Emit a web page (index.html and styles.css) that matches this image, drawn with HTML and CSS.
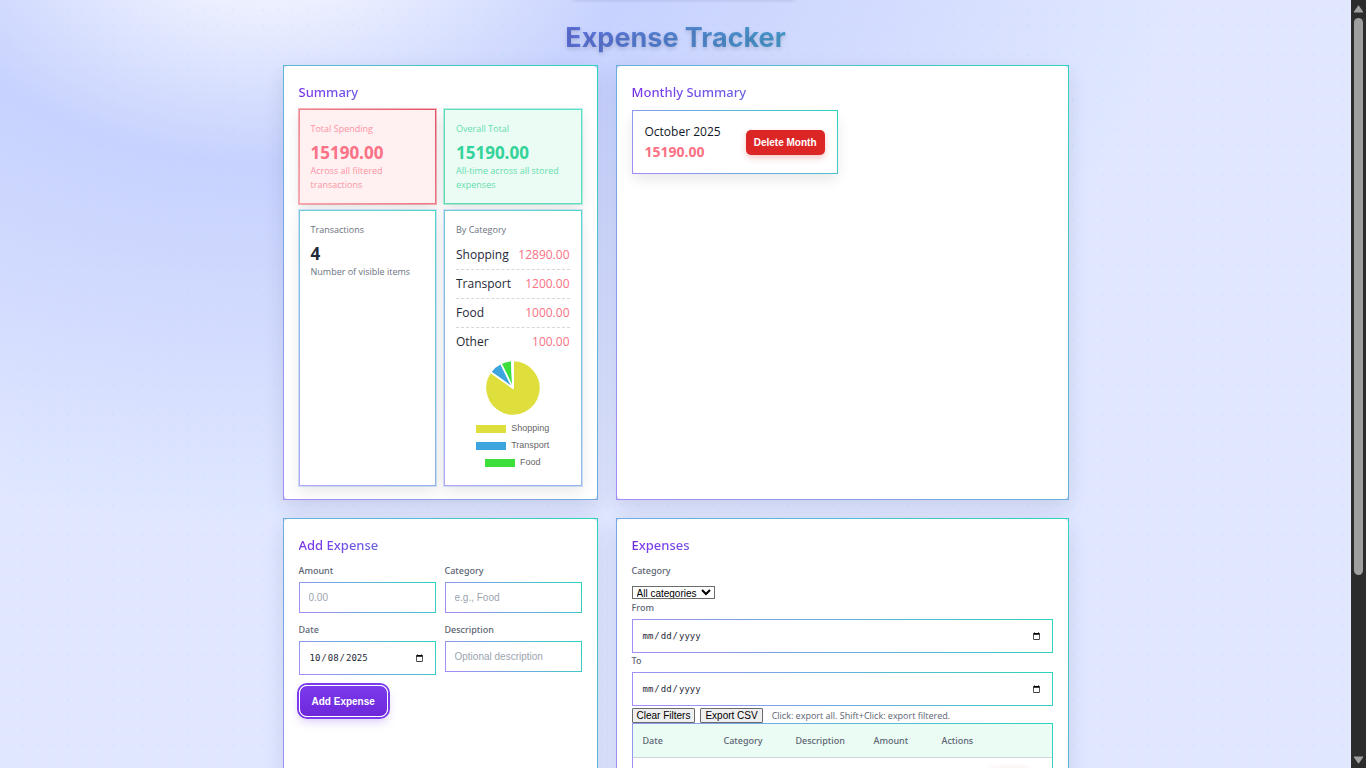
FILE: index.html
```html
<!DOCTYPE html>
<html lang="en">
<head>
<meta charset="utf-8">
<title>Expense Tracker</title>
<link rel="stylesheet" href="styles.css">
</head>
<body>
<div class="page">
  <div class="toast-edge"></div>
  <main class="container">
    <h1 class="title">Expense Tracker</h1>
    <div class="board">
      <section class="card">
        <h2 class="heading">Summary</h2>
        <div class="stats">
          <article class="stat stat-red">
            <div class="stat-label">Total Spending</div>
            <div class="stat-value">15190.00</div>
            <div class="stat-note">Across all filtered transactions</div>
          </article>
          <article class="stat stat-green">
            <div class="stat-label">Overall Total</div>
            <div class="stat-value">15190.00</div>
            <div class="stat-note">All-time across all stored expenses</div>
          </article>
          <article class="stat">
            <div class="stat-label">Transactions</div>
            <div class="stat-value">4</div>
            <div class="stat-note">Number of visible items</div>
          </article>
          <article class="stat">
            <div class="stat-label">By Category</div>
            <ul class="cats">
              <li class="cat"><span>Shopping</span><span class="money">12890.00</span></li>
              <li class="cat"><span>Transport</span><span class="money">1200.00</span></li>
              <li class="cat"><span>Food</span><span class="money">1000.00</span></li>
              <li class="cat"><span>Other</span><span class="money">100.00</span></li>
            </ul>
            <svg class="pie" viewBox="-28 -28 56 56" role="img" aria-label="Spending by category">
              <g stroke="#fff" stroke-width="1.6" stroke-linejoin="round">
                <path fill="#dede3c" d="M0 0V-27.5A27.5 27.5 0 1 1 -22.4 -16Z"/>
                <path fill="#3ca5de" d="M0 0L-22.4 -16A27.5 27.5 0 0 1 -12.1 -24.7Z"/>
                <path fill="#3cde3c" d="M0 0L-12.1 -24.7A27.5 27.5 0 0 1 -1.2 -27.5Z"/>
                <path fill="#fff" d="M0 0L-1.2 -27.5H0Z"/>
              </g>
            </svg>
            <ul class="legend">
              <li class="key"><span class="swatch yellow"></span>Shopping</li>
              <li class="key"><span class="swatch blue"></span>Transport</li>
              <li class="key"><span class="swatch green"></span>Food</li>
            </ul>
          </article>
        </div>
      </section>

      <section class="card">
        <h2 class="heading">Monthly Summary</h2>
        <div class="month">
          <div>
            <div class="month-name">October 2025</div>
            <div class="month-total">15190.00</div>
          </div>
          <button class="delete" type="button">Delete Month</button>
        </div>
      </section>

      <section class="card">
        <h2 class="heading">Add Expense</h2>
        <form class="form">
          <div class="field"><label for="amount">Amount</label><input class="input" id="amount" type="text" placeholder="0.00"></div>
          <div class="field"><label for="category">Category</label><input class="input" id="category" type="text" placeholder="e.g., Food"></div>
          <div class="field"><label for="date">Date</label><input class="input date" id="date" type="date" value="2025-10-08"></div>
          <div class="field"><label for="desc">Description</label><input class="input" id="desc" type="text" placeholder="Optional description"></div>
          <button class="add" type="button">Add Expense</button>
        </form>
      </section>

      <section class="card">
        <h2 class="heading">Expenses</h2>
        <div class="filters">
          <label for="filter">Category</label>
          <select class="select" id="filter"><option>All categories</option></select>
          <label for="from">From</label>
          <input class="input date" id="from" type="date">
          <label for="to">To</label>
          <input class="input date" id="to" type="date">
          <div class="tools">
            <button class="plain" type="button">Clear Filters</button>
            <button class="plain" type="button">Export CSV</button>
            <span class="hint">Click: export all. Shift+Click: export filtered.</span>
          </div>
        </div>
        <table class="table">
          <thead>
            <tr><th class="col-date">Date</th><th class="col-cat">Category</th><th class="col-desc">Description</th><th class="col-amount">Amount</th><th>Actions</th></tr>
          </thead>
          <tbody>
            <tr><td></td><td></td><td></td><td></td><td><span class="row-action"></span></td></tr>
          </tbody>
        </table>
      </section>
    </div>
  </main>
</div>
<div class="scrollbar" aria-hidden="true">
  <svg class="arrow" viewBox="0 0 9 8"><path fill="#9f9f9f" d="M4.5 0.5Q5 0.5 5.5 1.5L9 6.5V7.5H0V6.5L3.5 1.5Q4 .5 4.5 .5Z"/></svg>
  <div class="track"><div class="thumb"></div></div>
  <svg class="arrow" viewBox="0 0 9 8"><path fill="#9f9f9f" d="M4.5 7.5Q5 7.5 5.5 6.5L9 1.5V.5H0V1.5L3.5 6.5Q4 7.5 4.5 7.5Z"/></svg>
</div>
</body>
</html>
```
FILE: styles.css
```css
* { box-sizing: border-box; }

body {
  margin: 0;
  height: 100vh;
  display: flex;
  overflow: hidden;
  font-family: "Open Sans", "Noto Sans", sans-serif;
  font-size: 12px;
  color: #1f2937;
}

h1, h2, ul { margin: 0; padding: 0; list-style: none; }

.page {
  position: relative;
  flex: 1;
  overflow: hidden;
  background:
    radial-gradient(circle at 1px 1px, rgba(125, 211, 252, 0.11) 1px, transparent 1px) 7px 9px / 15px 15px,
    radial-gradient(910px 600px at 20% -77px, #ffffff 0%, #c7d2fe 40%, #e0e7ff 100%);
}

.toast-edge {
  position: absolute;
  top: -10px;
  left: 50%;
  width: 220px;
  height: 8px;
  margin-left: -102px;
  box-shadow: 0 1px 4px 0 rgba(60, 70, 110, 0.4);
}

.container { max-width: 786px; margin: 0 auto; padding-top: 18px; }

.title {
  margin-bottom: 7px;
  font: 700 27px/40px Inter, sans-serif;
  text-align: center;
  color: transparent;
  background: linear-gradient(90deg, #7c3aed, #2dd4bf);
  background-clip: text;
  -webkit-background-clip: text;
  text-shadow: 0 2px 4px rgba(0, 0, 0, 0.15);
}

.board { display: grid; grid-template-columns: 315fr 453fr; gap: 18px; }

.card {
  min-width: 0;
  padding: 15px 15px 13px;
  background: #fff;
  border: 1px solid;
  border-image: linear-gradient(45deg, #a78bfa, #2dd4bf) 1;
  border-radius: 8px;
  box-shadow: 0 8px 20px rgba(30, 40, 90, 0.12);
}

.heading {
  margin-bottom: 6px;
  font-family: "Noto Sans", sans-serif;
  font-size: 13px;
  font-weight: 500;
  line-height: 22px;
  color: transparent;
  background: linear-gradient(90deg, #6d28d9, #7c3aed 2%, #2dd4bf);
  background-clip: text;
  -webkit-background-clip: text;
}

.stats { display: grid; grid-template-columns: 1fr 1fr; gap: 6px 8px; }

.stat {
  min-width: 0;
  padding: 12px 11px 11px;
  background: #fff;
  border: 1px solid;
  border-image: linear-gradient(45deg, #b9a3fb, #4fdac8) 1;
  box-shadow: 0 6px 14px rgba(0, 0, 0, 0.09), 0 0 0 1px rgba(130, 190, 250, 0.35);
}

.stat-red {
  color: #fb7185;
  background: #fff0f1;
  border-image: linear-gradient(45deg, #fda4af, #e25563) 1;
  box-shadow: 0 6px 14px rgba(0, 0, 0, 0.1), 0 0 0 1px rgba(240, 90, 105, 0.45);
}

.stat-green {
  color: #34d399;
  background: #ebfcf4;
  border-image: linear-gradient(45deg, #5fdcae, #5adfcb) 1;
  box-shadow: 0 6px 14px rgba(0, 0, 0, 0.1), 0 0 0 1px rgba(90, 220, 190, 0.4);
}

.stat-label, .stat-note { font-size: 9px; line-height: 14px; color: #6b7280; }
.stat-red .stat-label, .stat-red .stat-note { color: #fc94a3; }
.stat-green .stat-label, .stat-green .stat-note { color: #65dcae; }
.stat-value { margin-top: 6px; font-size: 17px; font-weight: 700; line-height: 22px; }

.cats { margin-top: 4px; }
.cat {
  display: flex;
  justify-content: space-between;
  font-size: 12px;
  line-height: 28px;
  border-bottom: 1px dashed #d5d7db;
}
.cat:last-child { border-bottom: 0; }
.money { color: #fb7185; }

.pie { display: block; width: 56px; height: 56px; margin: 4px auto; }

.legend { padding-bottom: 3px; font: 9px/17px "Liberation Sans", sans-serif; color: #666; }
.key { display: flex; justify-content: center; align-items: center; gap: 5px; }
.swatch { width: 30px; height: 8px; }
.yellow { background: #dede3c; }
.blue { background: #3ca5de; }
.green { background: #3cde3c; }

.month {
  display: flex;
  justify-content: space-between;
  align-items: center;
  width: 206px;
  padding: 11px 12px;
  margin-top: 7px;
  background: #fff;
  border: 1px solid;
  border-image: linear-gradient(45deg, #a78bfa, #2dd4bf) 1;
  border-radius: 8px;
  box-shadow: 0 6px 14px rgba(0, 0, 0, 0.09);
}
.month-name { font-size: 12px; line-height: 20px; color: #111827; }
.month-total { font-size: 14px; font-weight: 700; line-height: 20px; color: #fb7185; }

.delete {
  height: 25px;
  padding: 0 8px;
  font: 700 10px "Liberation Sans", sans-serif;
  color: #fff;
  background: #dc2626;
  border: 0;
  border-radius: 5px;
  box-shadow: 0 3px 6px rgba(220, 38, 38, 0.25);
}

label {
  font-family: "Noto Sans", sans-serif;
  font-size: 9px;
  font-weight: 500;
  line-height: 14px;
  color: #5b6472;
}

.form {
  display: grid;
  grid-template-columns: 1fr 1fr;
  gap: 10px 9px;
  align-items: start;
  padding-top: 2px;
}
.field { display: flex; flex-direction: column; gap: 4px; }

.input {
  width: 100%;
  height: 31px;
  padding: 0 9px;
  font: 10px "Liberation Sans", sans-serif;
  color: #1f2937;
  background: #fff;
  border: 1px solid;
  border-image: linear-gradient(45deg, #a78bfa, #2dd4bf) 1;
}
.input::placeholder { color: #9ca3af; }
.date { height: 34px; font: 9px "DejaVu Sans Mono", monospace; }

.add {
  justify-self: start;
  height: 32px;
  padding: 0 12px;
  font: 700 10px "Liberation Sans", sans-serif;
  color: #fff;
  background: linear-gradient(180deg, #7c3aed, #6d28d9);
  border: 1px solid #fff;
  border-radius: 8px;
  box-shadow: 0 0 0 2px #7c3aed, 0 5px 10px rgba(124, 58, 237, 0.25);
}

.filters { display: flex; flex-direction: column; align-items: flex-start; padding-top: 2px; }
.select {
  width: 83px;
  height: 13px;
  margin: 8px 0 2px;
  padding: 0;
  font: 10px/11px "Liberation Sans", sans-serif;
  color: #000;
  background: #fff;
  border: 1px solid #6b6b6b;
  border-radius: 0;
}
.filters .date { margin: 4px 0 1px; }

.tools { display: flex; align-items: center; gap: 5px; margin-top: 1px; }
.plain {
  height: 15px;
  padding: 0 4px;
  font: 10px "Liberation Sans", sans-serif;
  color: #000;
  background: #efefef;
  border: 1px solid #6b6b6b;
  border-radius: 1px;
}
.hint { margin-left: 4px; font-size: 9px; line-height: 14px; color: #5b6472; }

.table {
  width: 100%;
  table-layout: fixed;
  border-collapse: separate;
  border-spacing: 0;
  border: 1px solid;
  border-image: linear-gradient(45deg, #a78bfa, #2dd4bf) 1;
}
.table th {
  height: 34px;
  padding: 0 10px;
  font-family: "Noto Sans", sans-serif;
  font-size: 9px;
  font-weight: 500;
  text-align: left;
  color: #5b6472;
  background: #ebfcf4;
  border-bottom: 1px solid #d1d5db;
}
.table td { height: 50px; padding: 10px; vertical-align: top; }
.col-date { width: 81px; }
.col-cat { width: 72px; }
.col-desc { width: 78px; }
.col-amount { width: 68px; }
.row-action {
  display: block;
  width: 40px;
  height: 22px;
  margin-left: 47px;
  background: #dc2626;
  border-radius: 5px;
  box-shadow: 0 2px 6px rgba(220, 38, 38, 0.25);
}

.scrollbar {
  display: flex;
  flex-direction: column;
  align-items: center;
  width: 15px;
  padding: 5px 0 4px;
  background: #2c2c2c;
}
.arrow { width: 9px; height: 8px; }
.track { flex: 1; width: 9px; padding: 5px 0; }
.thumb { height: 76%; background: #9f9f9f; border-radius: 5px; }
```
